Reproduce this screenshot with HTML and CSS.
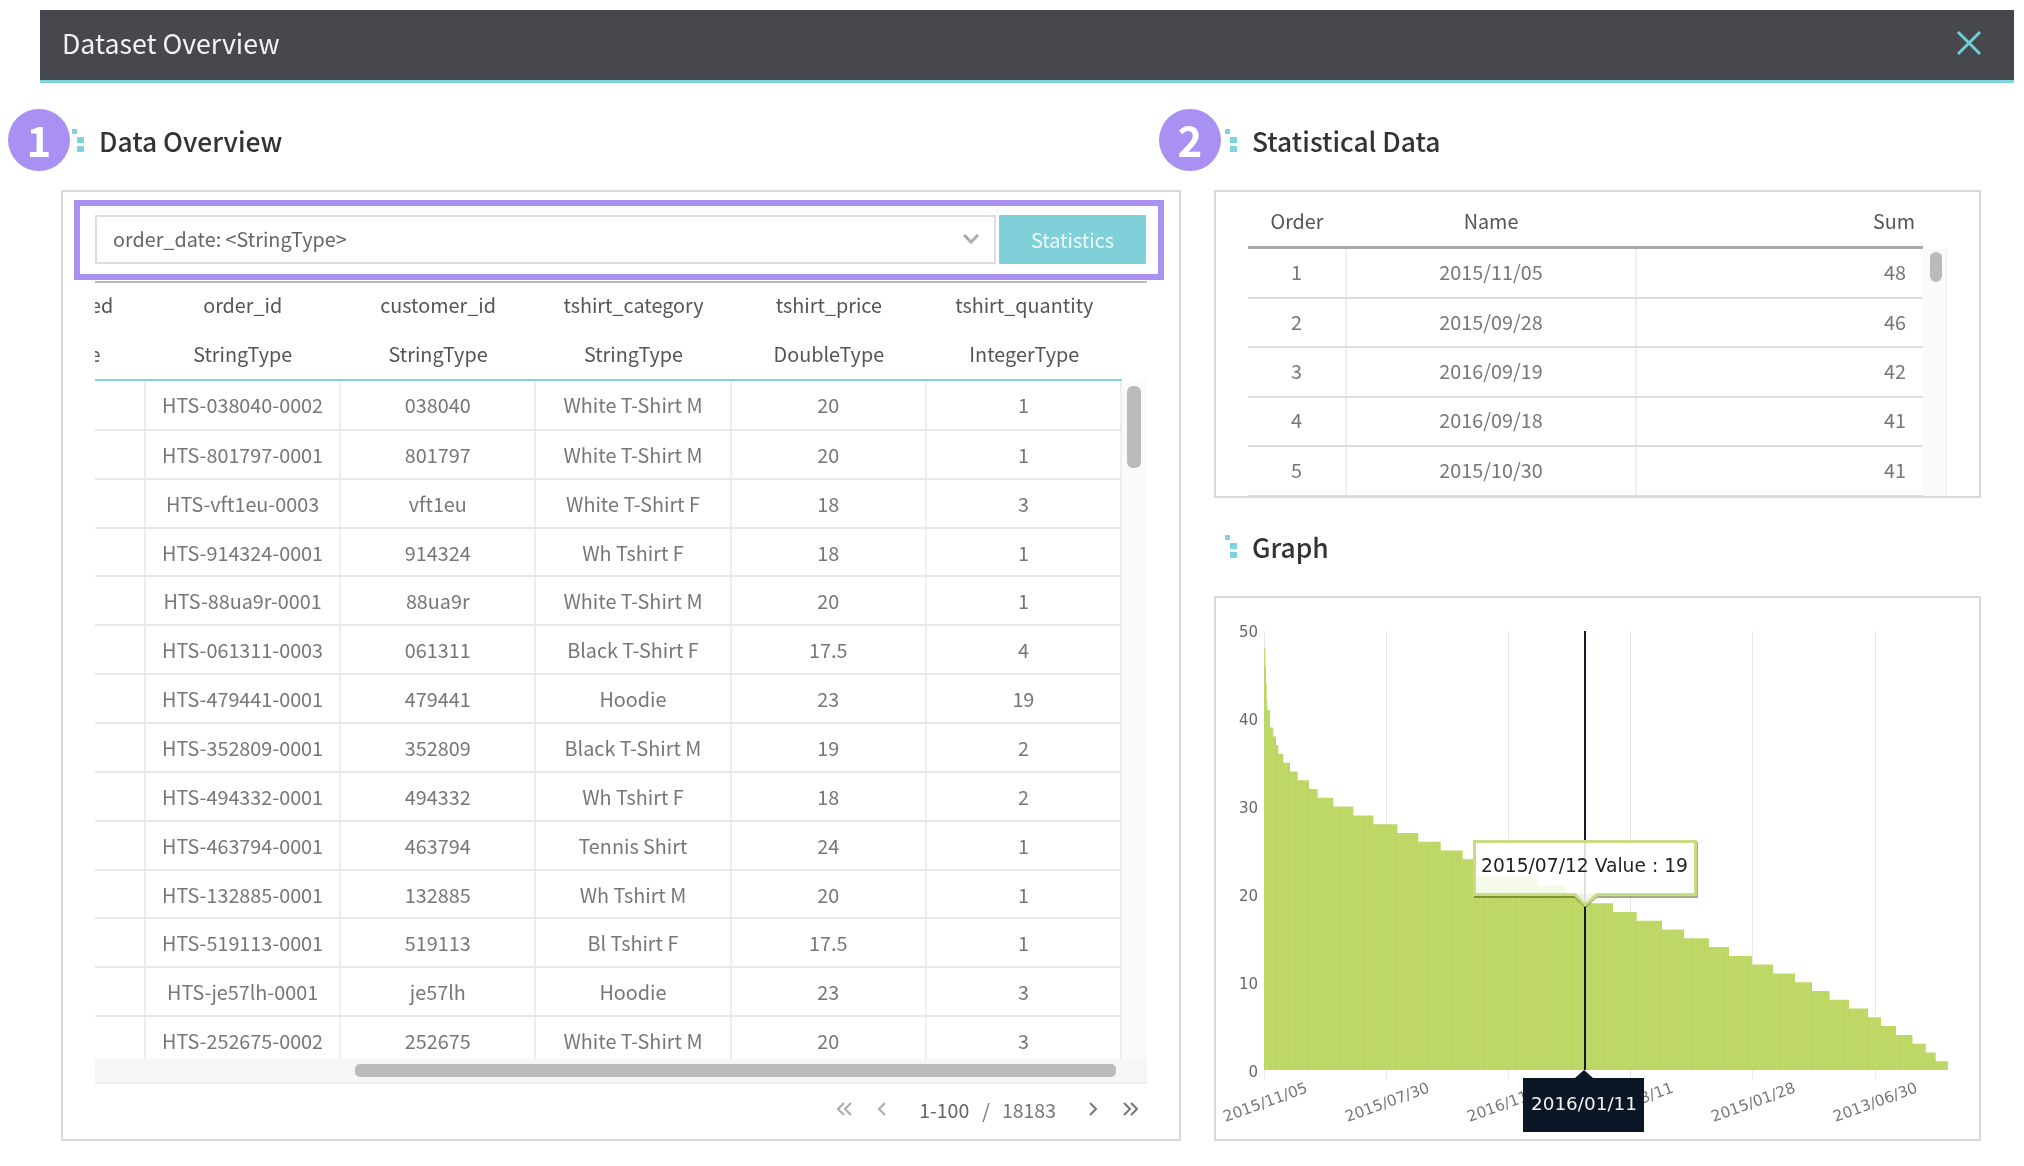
FILE: index.html
```html
<!DOCTYPE html>
<html lang="en">
<head>
    <meta charset="UTF-8">
    <title>Dataset Overview</title>
    <link rel="stylesheet" href="styles.css">
</head>
<body>

    <header class="top-bar">
        <h1>Dataset Overview</h1>
        <svg class="close-icon" width="26" height="26" viewBox="0 0 26 26"><path d="M2 2L24 24M24 2L2 24"/></svg>
    </header>

    <main class="content">
        <section class="col-left">
            <div class="section-title">
                <span class="badge badge-left">1</span>
                <svg class="title-mark" width="12" height="24" viewBox="0 0 12 24"><path d="M0 0h5v5H0zM5 8h7v6H5zM5 17h7v6H5z"/></svg>
                <h2>Data Overview</h2>
            </div>
            <div class="panel data-panel">
                <div class="highlight"></div>
                <div class="toolbar">
                    <div class="select-box">
                        <span>order_date: &lt;StringType&gt;</span>
                        <svg width="16" height="10" viewBox="0 0 16 10"><path d="M1 1l7 7 7-7"/></svg>
                    </div>
                    <button class="stats-btn">Statistics</button>
                </div>

                <div class="data-grid">
                    <div class="grid-head">
                        <table class="grid-table">
                            <colgroup><col class="col-first"><col><col><col><col><col></colgroup>
                            <tr><th>order_parsed</th><th>order_id</th><th>customer_id</th><th>tshirt_category</th><th>tshirt_price</th><th>tshirt_quantity</th></tr>
                            <tr><th>StringType</th><th>StringType</th><th>StringType</th><th>StringType</th><th>DoubleType</th><th>IntegerType</th></tr>
                        </table>
                    </div>
                    <div class="grid-scroll">
                        <div class="grid-body">
                            <table class="grid-table">
                                <colgroup><col class="col-first"><col><col><col><col><col></colgroup>
                                <tr><td></td><td>HTS-038040-0002</td><td>038040</td><td>White T-Shirt M</td><td>20</td><td>1</td></tr>
                                <tr><td></td><td>HTS-801797-0001</td><td>801797</td><td>White T-Shirt M</td><td>20</td><td>1</td></tr>
                                <tr><td></td><td>HTS-vft1eu-0003</td><td>vft1eu</td><td>White T-Shirt F</td><td>18</td><td>3</td></tr>
                                <tr><td></td><td>HTS-914324-0001</td><td>914324</td><td>Wh Tshirt F</td><td>18</td><td>1</td></tr>
                                <tr><td></td><td>HTS-88ua9r-0001</td><td>88ua9r</td><td>White T-Shirt M</td><td>20</td><td>1</td></tr>
                                <tr><td></td><td>HTS-061311-0003</td><td>061311</td><td>Black T-Shirt F</td><td>17.5</td><td>4</td></tr>
                                <tr><td></td><td>HTS-479441-0001</td><td>479441</td><td>Hoodie</td><td>23</td><td>19</td></tr>
                                <tr><td></td><td>HTS-352809-0001</td><td>352809</td><td>Black T-Shirt M</td><td>19</td><td>2</td></tr>
                                <tr><td></td><td>HTS-494332-0001</td><td>494332</td><td>Wh Tshirt F</td><td>18</td><td>2</td></tr>
                                <tr><td></td><td>HTS-463794-0001</td><td>463794</td><td>Tennis Shirt</td><td>24</td><td>1</td></tr>
                                <tr><td></td><td>HTS-132885-0001</td><td>132885</td><td>Wh Tshirt M</td><td>20</td><td>1</td></tr>
                                <tr><td></td><td>HTS-519113-0001</td><td>519113</td><td>Bl Tshirt F</td><td>17.5</td><td>1</td></tr>
                                <tr><td></td><td>HTS-je57lh-0001</td><td>je57lh</td><td>Hoodie</td><td>23</td><td>3</td></tr>
                                <tr><td></td><td>HTS-252675-0002</td><td>252675</td><td>White T-Shirt M</td><td>20</td><td>3</td></tr>
                            </table>
                        </div>
                        <div class="vscroll"><div class="vthumb"></div></div>
                    </div>
                    <div class="hscroll"><div class="hthumb"></div></div>
                </div>

                <div class="pager">
                    <svg class="pg-light" width="15" height="14" viewBox="0 0 15 14"><path d="M7 1L1 7l6 6M14 1L8 7l6 6"/></svg>
                    <svg class="pg-light pg-prev" width="9" height="14" viewBox="0 0 9 14"><path d="M8 1L2 7l6 6"/></svg>
                    <span class="pg-range">1-100</span>
                    <span class="pg-slash">/</span>
                    <span class="pg-total">18183</span>
                    <svg class="pg-dark pg-next" width="9" height="14" viewBox="0 0 9 14"><path d="M1 1l6 6-6 6"/></svg>
                    <svg class="pg-dark pg-last" width="15" height="14" viewBox="0 0 15 14"><path d="M1 1l6 6-6 6M8 1l6 6-6 6"/></svg>
                </div>
            </div>
        </section>

        <section class="col-right">
            <div class="section-title">
                <span class="badge badge-right">2</span>
                <svg class="title-mark" width="12" height="24" viewBox="0 0 12 24"><path d="M0 0h5v5H0zM5 8h7v6H5zM5 17h7v6H5z"/></svg>
                <h2>Statistical Data</h2>
            </div>
            <div class="panel stat-panel">
                <table class="stat-table stat-head">
                    <colgroup><col class="col-order"><col class="col-name"><col class="col-sum"></colgroup>
                    <tr><th>Order</th><th>Name</th><th class="num">Sum</th></tr>
                </table>
                <div class="stat-scroll">
                    <table class="stat-table">
                        <colgroup><col class="col-order"><col class="col-name"><col class="col-sum"></colgroup>
                        <tr><td>1</td><td>2015/11/05</td><td class="num">48</td></tr>
                        <tr><td>2</td><td>2015/09/28</td><td class="num">46</td></tr>
                        <tr><td>3</td><td>2016/09/19</td><td class="num">42</td></tr>
                        <tr><td>4</td><td>2016/09/18</td><td class="num">41</td></tr>
                        <tr><td>5</td><td>2015/10/30</td><td class="num">41</td></tr>
                    </table>
                    <div class="stat-track"><div class="stat-thumb"></div></div>
                </div>
            </div>

            <div class="section-title graph-title">
                <svg class="title-mark" width="12" height="24" viewBox="0 0 12 24"><path d="M0 0h5v5H0zM5 8h7v6H5zM5 17h7v6H5z"/></svg>
                <h2>Graph</h2>
            </div>
            <div class="panel graph-panel">
                <!-- viewBox uses page coordinates so the values read the same as the screenshot -->
                <svg class="chart" width="763" height="541" viewBox="1216 599 763 541">
                    <defs>
                        <pattern id="stripes" width="6.3" height="10" patternUnits="userSpaceOnUse">
                            <rect width="6.3" height="10" fill="#bdd765"/>
                            <rect width="1" height="10" fill="#c1da6e"/>
                        </pattern>
                    </defs>

                    <g class="grid-lines">
                        <path d="M1264.5 632V1080M1386.5 632V1080M1508.5 632V1080M1630.5 632V1080M1752.5 632V1080M1875.5 632V1080"/>
                    </g>

                    <path fill="url(#stripes)" d="M1264 1071V649.6H1265.3V667.1H1266V684.7H1266.7V702.2H1267.3V711H1270V728.6H1273.3V737.4H1276V746.1H1278.3V754.9H1283.3V763.7H1290V772.5H1297.7V781.3H1309V790H1317.7V798.8H1333.3V807.6H1353.3V816.4H1373.3V825.2H1397.3V833.9H1418.3V842.7H1440.7V851.5H1462.7V860.3H1476V877.8H1537.7V886.6H1565.7V895.4H1585V904.2H1613V913H1636.7V921.7H1662V930.5H1684V939.3H1709V948.1H1729V956.9H1752V965.6H1773V974.4H1795V983.2H1812V992H1829.5V1000.8H1849V1009.5H1868V1018.3H1881V1027.1H1896V1035.9H1912.5V1044.7H1925.7V1053.4H1935.7V1062.2H1948V1071Z"/>

                    <g class="y-labels">
                        <text x="1258" y="638">50</text>
                        <text x="1258" y="726">40</text>
                        <text x="1258" y="814">30</text>
                        <text x="1258" y="902">20</text>
                        <text x="1258" y="990">10</text>
                        <text x="1258" y="1078">0</text>
                    </g>

                    <g class="x-labels">
                        <text transform="translate(1267 1108) rotate(-20)">2015/11/05</text>
                        <text transform="translate(1389 1108) rotate(-20)">2015/07/30</text>
                        <text transform="translate(1511 1108) rotate(-20)">2016/11/05</text>
                        <text transform="translate(1633 1108) rotate(-20)">2015/03/11</text>
                        <text transform="translate(1755 1108) rotate(-20)">2015/01/28</text>
                        <text transform="translate(1877 1108) rotate(-20)">2013/06/30</text>
                    </g>

                    <path class="cursor-line" d="M1585 632V1071"/>

                    <path class="tip-shadow" d="M1474 895H1695V843H1698V899H1597L1585 909L1575 899H1474Z"/>
                    <path class="tip-box" d="M1474.5 842.5H1695.5V895.5H1597L1585 906L1575 895.5H1474.5Z"/>
                    <text class="tip-text" x="1481" y="873">2015/07/12 Value : 19</text>

                    <path class="date-flag" d="M1523 1079H1575L1584 1071L1593 1079H1644V1133H1523Z"/>
                    <text class="date-text" x="1584" y="1111">2016/01/11</text>
                </svg>
            </div>
        </section>
    </main>

</body>
</html>
```

FILE: styles.css
```css
* {
    box-sizing: border-box;
}
body {
    margin: 0;
    background-color: #fff;
    font-family: "Noto Sans CJK KR", "Noto Sans", sans-serif;
    color: #333;
}
h1, h2 {
    margin: 0;
    font-weight: 400;
}

.top-bar {
    display: flex;
    align-items: center;
    justify-content: space-between;
    height: 73px;
    margin: 10px 10px 0 40px;
    padding: 0 32px 4px 22px;
    background-color: #47484d;
    border-bottom: 3px solid #7fd3da;
}
.top-bar h1 {
    color: #f2f2f2;
    font-size: 26.7px;
    line-height: 36px;
}
.close-icon path {
    fill: none;
    stroke: #6fd0d8;
    stroke-width: 3;
}

.content {
    display: flex;
    gap: 33px;
    padding-left: 61px;
}
.col-left {
    width: 1120px;
}
.col-right {
    width: 767px;
}

.section-title {
    position: relative;
    display: flex;
    align-items: center;
    gap: 15px;
    height: 107px;
    padding: 8px 0 0 11px;
}
.section-title h2 {
    font-size: 26.4px;
    font-weight: 500;
    line-height: 36px;
    color: #333;
}
.graph-title {
    height: 98px;
    padding-top: 0;
}
.title-mark path {
    fill: #7fd3da;
}
.badge {
    position: absolute;
    top: 26px;
    width: 62px;
    height: 62px;
    border-radius: 50%;
    background-color: #a991f3;
    color: #fff;
    font-size: 42px;
    font-weight: 700;
    line-height: 60px;
    text-align: center;
}
.badge-left {
    left: -53px;
}
.badge-right {
    left: -55px;
}

.panel {
    position: relative;
    border: 2px solid #d9d9d9;
    background-color: #fff;
}
.data-panel {
    height: 951px;
    padding: 23px 33px 0 32px;
}
.highlight {
    position: absolute;
    top: 8px;
    left: 11px;
    width: 1090px;
    height: 80px;
    border: 6px solid #a991f3;
}
.toolbar {
    display: flex;
    gap: 3px;
    height: 49px;
    margin-bottom: 17px;
}
.select-box {
    display: flex;
    align-items: center;
    justify-content: space-between;
    width: 902px;
    padding: 0 15px 2px 16px;
    border: 2px solid #ddd;
    font-size: 19.8px;
    color: #666;
}
.select-box path {
    fill: none;
    stroke: #aaa;
    stroke-width: 3;
}
.stats-btn {
    width: 147px;
    border: none;
    border-radius: 1px;
    background-color: #7fd0d9;
    color: #eefafb;
    font-family: inherit;
    font-size: 19.8px;
}

.data-grid {
    width: 1052px;
    border-top: 2px solid #bbb;
}
.grid-head {
    width: 1027px;
    overflow: hidden;
    border-bottom: 2px solid #7fd3da;
}
.grid-table {
    width: 1165px;
    margin-left: -138px;
    border-collapse: collapse;
    table-layout: fixed;
    font-size: 19.8px;
}
.col-first {
    width: 188px;
}
.grid-table th {
    height: 48px;
    padding: 0 0 3px;
    font-weight: 400;
    color: #555;
    white-space: nowrap;
}
.grid-table tr:first-child th {
    padding-bottom: 5px;
}
.grid-table td {
    height: 48.86px;
    padding: 0;
    border-right: 2px solid #eee;
    border-bottom: 2px solid #e8e8e8;
    color: #777;
    text-align: center;
    white-space: nowrap;
}
.grid-scroll {
    display: flex;
    height: 678px;
}
.grid-body {
    width: 1027px;
    overflow: hidden;
}
.vscroll {
    width: 25px;
    padding: 5px 6px 0 5px;
    background-color: #fafafa;
}
.vthumb {
    height: 82px;
    border-radius: 6px;
    background-color: #bbb;
}
.hscroll {
    height: 25px;
    padding: 5px 31px 0 260px;
    background-color: #f6f6f6;
    border-bottom: 2px solid #eee;
}
.hthumb {
    height: 13px;
    border-radius: 5px;
    background-color: #bbb;
}

.pager {
    display: flex;
    align-items: center;
    justify-content: flex-end;
    height: 50px;
    width: 1052px;
    padding-right: 9px;
    font-size: 19.5px;
    color: #777;
}
.pager path {
    fill: none;
    stroke-width: 2;
}
.pg-light path {
    stroke: #aaa;
}
.pg-dark path {
    stroke: #777;
}
.pg-prev {
    margin-left: 25px;
}
.pg-range {
    margin-left: 33px;
    color: #666;
}
.pg-slash {
    margin: 0 12px 0 13px;
}
.pg-next {
    margin-left: 33px;
}
.pg-last {
    margin-left: 25px;
}

.stat-panel {
    height: 308px;
    padding: 0 32px;
    overflow: hidden;
}
.stat-table {
    width: 675px;
    border-collapse: collapse;
    table-layout: fixed;
    font-size: 19.8px;
}
.col-order {
    width: 98px;
}
.col-name {
    width: 290px;
}
.stat-table th {
    height: 55px;
    padding: 3px 0 0;
    font-weight: 400;
    color: #555;
    border-bottom: 3px solid #aaa;
}
.stat-table th.num {
    padding-right: 8px;
    text-align: right;
}
.stat-table td {
    height: 49px;
    padding: 0 0 3px;
    border-right: 2px solid #eee;
    border-bottom: 2px solid #ddd;
    color: #777;
    text-align: center;
}
.stat-table td:last-child {
    border-right: none;
}
.stat-table td.num {
    padding-right: 17px;
    text-align: right;
}
.stat-scroll {
    display: flex;
    height: 248px;
}
.stat-track {
    width: 24px;
    padding: 3px 4px 0 7px;
    background-color: #fafafa;
    border-right: 1px solid #eee;
}
.stat-thumb {
    height: 30px;
    border-radius: 6px;
    background-color: #bbb;
}

.graph-panel {
    height: 545px;
}
.chart {
    display: block;
}
.chart text {
    font-family: "DejaVu Sans", sans-serif;
}
.grid-lines path {
    fill: none;
    stroke: #e8e8e8;
    stroke-width: 1;
}
.y-labels text {
    font-size: 15px;
    fill: #666;
    text-anchor: end;
}
.x-labels text {
    font-size: 15.3px;
    fill: #777;
    text-anchor: middle;
}
.cursor-line {
    fill: none;
    stroke: #0f1a2a;
    stroke-width: 2;
}
.tip-shadow {
    fill: #a8ad88;
    mix-blend-mode: multiply;
}
.tip-box {
    fill: rgba(255, 255, 255, 0.86);
    stroke: #c6dc85;
    stroke-width: 3;
}
.chart .tip-text {
    font-size: 18.7px;
    fill: #222;
}
.date-flag {
    fill: #0b1626;
}
.chart .date-text {
    font-size: 18.4px;
    fill: #f2f2f2;
    text-anchor: middle;
}
```
